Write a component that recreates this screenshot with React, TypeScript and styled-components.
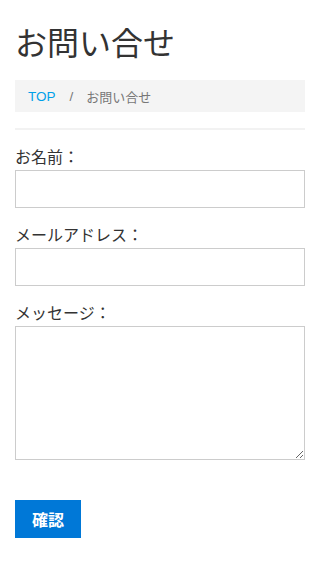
import React from 'react';
import styled, { createGlobalStyle } from 'styled-components';

const GlobalStyle = createGlobalStyle`
  * {
    box-sizing: border-box;
  }
  body {
    margin: 0;
    background: #fff;
    color: #333;
    font-family: "Liberation Sans", "Noto Sans CJK JP", sans-serif;
  }
`;

const fields = [
  { id: 'name', label: 'お名前：', multi: false },
  { id: 'email', label: 'メールアドレス：', multi: false },
  { id: 'message', label: 'メッセージ：', multi: true },
];

const App = () => {
  return (
    <>
      <GlobalStyle />
      <StPage>
        <StTitle>お問い合せ</StTitle>
        <StBreadcrumb>
          <StCrumbLink href="#">TOP</StCrumbLink>
          <StSlash>/</StSlash>
          <StCurrent>お問い合せ</StCurrent>
        </StBreadcrumb>
        <StDivider />
        <form onSubmit={(e) => e.preventDefault()}>
          {fields.map((field) => (
            <StField key={field.id}>
              <StLabel htmlFor={field.id}>{field.label}</StLabel>
              {field.multi ? (
                <StTextarea id={field.id} />
              ) : (
                <StInput id={field.id} type="text" />
              )}
            </StField>
          ))}
          <StButton type="submit">確認</StButton>
        </form>
      </StPage>
    </>
  );
};

export default App;

const StPage = styled.div`
  padding: 0 15px 30px;
`;

const StTitle = styled.h1`
  margin: 24px 0 16px;
  font-size: 32px;
  line-height: 40px;
  font-weight: 400;
  color: #333;
`;

const StBreadcrumb = styled.nav`
  display: flex;
  align-items: center;
  height: 32px;
  padding: 0 13px;
  background-color: #f4f4f4;
  font-size: 13.5px;
`;

const StCrumbLink = styled.a`
  color: #00a0e9;
  text-decoration: none;
`;

const StSlash = styled.span`
  color: #777;
  margin: 0 13px 0 14px;
`;

const StCurrent = styled.span`
  color: #777;
  font-size: 13px;
`;

const StDivider = styled.hr`
  margin: 16px 0 16px;
  border: none;
  height: 2px;
  background-color: #f2f2f2;
`;

const StField = styled.div`
  margin-bottom: 16px;
`;

const StLabel = styled.label`
  display: block;
  font-size: 16px;
  line-height: 24px;
  color: #333;
`;

const StInput = styled.input`
  display: block;
  width: 100%;
  height: 38px;
  margin: 0;
  padding: 6px 10px;
  border: 1px solid #ccc;
  border-radius: 0;
  font-size: 16px;
  font-family: inherit;
  background: #fff;
`;

const StTextarea = styled.textarea`
  display: block;
  width: 100%;
  height: 134px;
  margin: 0;
  padding: 6px 10px;
  border: 1px solid #ccc;
  border-radius: 0;
  font-size: 16px;
  font-family: inherit;
  background: #fff;
`;

const StButton = styled.button`
  display: block;
  margin-top: 40px;
  height: 38px;
  padding: 0 17px;
  border: none;
  border-radius: 0;
  background-color: #0078d7;
  color: #fff;
  font-size: 16px;
  font-weight: 700;
  font-family: inherit;
  cursor: pointer;
`;
